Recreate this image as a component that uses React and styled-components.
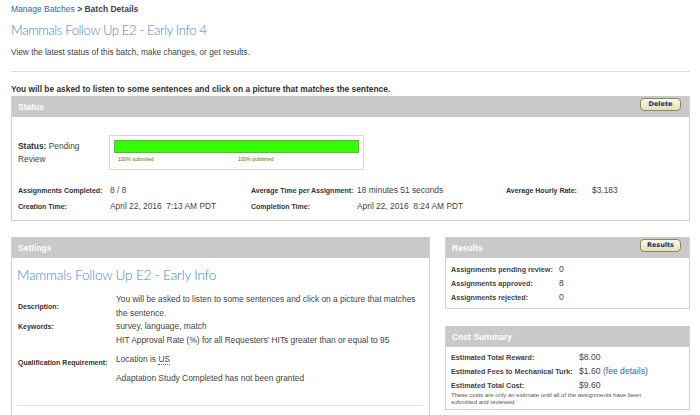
import styled, { createGlobalStyle } from "styled-components";

const Global = createGlobalStyle`
  html, body {
    margin: 0;
    padding: 0;
    background: #fff;
  }
  body {
    font-family: "Liberation Sans", Arial, sans-serif;
    color: #333;
    font-size: 8.5px;
  }
`;

const Page = styled.div`
  width: 700px;
  height: 415px;
  overflow: hidden;
  padding: 0 10px 0 11px;
  box-sizing: border-box;
`;

const Crumbs = styled.div`
  padding-top: 4px;
  font-size: 8.5px;
  line-height: 10px;
  color: #444;
  font-weight: bold;
`;

const Link = styled.a`
  color: #2d68a8;
  font-weight: normal;
  text-decoration: none;
`;

const Title = styled.h1`
  margin: ${(p) => (p.$small ? "8px 0 0" : "7px 0 0")};
  font-family: Lato, "Liberation Sans", sans-serif;
  font-weight: 300;
  font-size: ${(p) => (p.$small ? "13.6px" : "13px")};
  letter-spacing: ${(p) => (p.$small ? "-0.2px" : "-0.35px")};
  line-height: 18px;
  color: #4287cf;
`;

const Intro = styled.p`
  margin: 8px 0 0;
  font-size: 8.3px;
  line-height: 10px;
  color: #444;
`;

const Rule = styled.hr`
  border: 0;
  border-top: 1px solid #dcdcdc;
  margin: ${(p) => p.$margin || "14px 0 0"};
`;

const Lead = styled.p`
  margin: 12px 0 0;
  font-weight: bold;
  font-size: 8.4px;
  line-height: 10px;
  color: #333;
`;

const Panel = styled.section`
  border: 1px solid #d0d0d0;
  border-top: 0;
  background: #fff;
  margin-top: ${(p) => p.$top || "0"};
  box-sizing: border-box;
`;

const PanelHead = styled.div`
  height: 21px;
  background: #c9c9c9;
  display: flex;
  align-items: center;
  justify-content: space-between;
  padding: 0 8px 0 6px;
  color: #fff;
  font-weight: bold;
  font-size: 8.5px;
`;

const Button = styled.button`
  height: 13px;
  min-width: 41px;
  padding: 0 6px;
  margin-top: -4px;
  border: 1px solid #8c8a62;
  border-radius: 4px;
  background: linear-gradient(#fbf9e6, #e4dfb6);
  color: #1d2a6b;
  font-family: Verdana, "DejaVu Sans", sans-serif;
  font-weight: bold;
  font-size: 6.5px;
  line-height: 11px;
`;

const StatusBody = styled.div`
  padding: 18px 6px 8px;
`;

const StatusTop = styled.div`
  display: flex;
  align-items: center;
`;

const StatusText = styled.div`
  width: 91px;
  font-size: 8.4px;
  line-height: 13px;
  color: #444;
  b {
    color: #333;
  }
`;

const ProgressBox = styled.div`
  width: 255px;
  height: 35px;
  border: 1px solid #d8d8d8;
  box-sizing: border-box;
  padding: 4px 4px 0;
`;

const Bar = styled.div`
  height: 13px;
  background: #33ff00;
  border: 1px solid #5bb83a;
  box-sizing: border-box;
`;

const BarLabels = styled.div`
  display: flex;
  padding: 3px 0 0 4px;
  font-size: 5px;
  line-height: 6px;
  color: #6a6a00;
  span {
    width: 120px;
  }
`;

const StatsGrid = styled.div`
  display: grid;
  grid-template-columns: 92px 141px 106px 149px 86px auto;
  row-gap: 4px;
  margin-top: 14px;
  align-items: baseline;
`;

const Label = styled.span`
  font-weight: bold;
  font-size: 7px;
  line-height: 9px;
  color: #333;
  white-space: nowrap;
  align-self: ${(p) => p.$align || "auto"};
`;

const Value = styled.span`
  font-size: 8.4px;
  line-height: 12px;
  color: #444;
  white-space: nowrap;
`;

const Bottom = styled.div`
  display: flex;
  gap: 15px;
  margin-top: 16px;
  align-items: flex-start;
`;

const Left = styled.div`
  width: 419px;
  flex: none;
`;

const Right = styled.div`
  flex: 1;
  display: flex;
  flex-direction: column;
  gap: 17px;
`;

const SettingsBody = styled.div`
  padding: 0 6px 0 5px;
  height: 200px;
`;

const SettingsGrid = styled.div`
  display: grid;
  grid-template-columns: 98px 306px;
  margin-top: 9px;
  padding-left: 1px;
  align-items: center;
`;

const Cell = styled.div`
  font-size: 8.4px;
  line-height: 13.5px;
  color: #444;
  padding: ${(p) => p.$pad || "0"};
`;

const Dotted = styled.span`
  border-bottom: 1px dotted #666;
`;

const InfoBody = styled.div`
  padding: ${(p) => p.$pad || "4px 5px 4px"};
`;

const InfoRow = styled.div`
  display: flex;
  align-items: baseline;
  height: 14px;
  line-height: 14px;
`;

const InfoLabel = styled.span`
  width: ${(p) => p.$w};
  flex: none;
  font-weight: bold;
  font-size: 7.2px;
  color: #444;
`;

const InfoValue = styled.span`
  font-size: 8.6px;
  color: #444;
`;

const FeeLink = styled.a`
  color: #2d68a8;
  text-decoration: none;
`;

const Note = styled.p`
  margin: 0;
  font-size: 6px;
  line-height: 7px;
  color: #555;
  width: 196px;
`;

export default function App() {
  return (
    <Page>
      <Global />
      <Crumbs>
        <Link href="#">Manage Batches</Link> &gt; Batch Details
      </Crumbs>
      <Title>Mammals Follow Up E2 - Early Info 4</Title>
      <Intro>View the latest status of this batch, make changes, or get results.</Intro>
      <Rule />
      <Lead>You will be asked to listen to some sentences and click on a picture that matches the sentence.</Lead>

      <Panel $top="2px">
        <PanelHead>
          Status
          <Button>Delete</Button>
        </PanelHead>
        <StatusBody>
          <StatusTop>
            <StatusText>
              <b>Status:</b> Pending
              <br />
              Review
            </StatusText>
            <ProgressBox>
              <Bar />
              <BarLabels>
                <span>100% submitted</span>
                <span>100% published</span>
              </BarLabels>
            </ProgressBox>
          </StatusTop>
          <StatsGrid>
            <Label>Assignments Completed:</Label>
            <Value>8 / 8</Value>
            <Label>Average Time per Assignment:</Label>
            <Value>18 minutes 51 seconds</Value>
            <Label>Average Hourly Rate:</Label>
            <Value>$3.183</Value>
            <Label>Creation Time:</Label>
            <Value>April 22, 2016 &nbsp;7:13 AM PDT</Value>
            <Label>Completion Time:</Label>
            <Value>April 22, 2016 &nbsp;8:24 AM PDT</Value>
          </StatsGrid>
        </StatusBody>
      </Panel>

      <Bottom>
        <Left>
          <Panel>
            <PanelHead>Settings</PanelHead>
            <SettingsBody>
              <Title $small>Mammals Follow Up E2 - Early Info</Title>
              <SettingsGrid>
                <Label>Description:</Label>
                <Cell>
                  You will be asked to listen to some sentences and click on a picture that matches the sentence.
                </Cell>
                <Label>Keywords:</Label>
                <Cell>survey, language, match</Cell>
                <span />
                <Cell>HIT Approval Rate (%) for all Requesters' HITs greater than or equal to 95</Cell>
                <Label $align="end">Qualification Requirement:</Label>
                <Cell $pad="6px 0 0">
                  Location is <Dotted>US</Dotted>
                </Cell>
                <span />
                <Cell $pad="5px 0 0">Adaptation Study Completed has not been granted</Cell>
              </SettingsGrid>
              <Rule $margin="20px 0 0" />
            </SettingsBody>
          </Panel>
        </Left>
        <Right>
          <Panel>
            <PanelHead>
              Results
              <Button>Results</Button>
            </PanelHead>
            <InfoBody>
              <InfoRow>
                <InfoLabel $w="108px">Assignments pending review:</InfoLabel>
                <InfoValue>0</InfoValue>
              </InfoRow>
              <InfoRow>
                <InfoLabel $w="108px">Assignments approved:</InfoLabel>
                <InfoValue>8</InfoValue>
              </InfoRow>
              <InfoRow>
                <InfoLabel $w="108px">Assignments rejected:</InfoLabel>
                <InfoValue>0</InfoValue>
              </InfoRow>
            </InfoBody>
          </Panel>
          <Panel>
            <PanelHead>Cost Summary</PanelHead>
            <InfoBody $pad="3px 5px 3px">
              <InfoRow>
                <InfoLabel $w="128px">Estimated Total Reward:</InfoLabel>
                <InfoValue>$8.00</InfoValue>
              </InfoRow>
              <InfoRow>
                <InfoLabel $w="128px">Estimated Fees to Mechanical Turk:</InfoLabel>
                <InfoValue>
                  $1.60 <FeeLink href="#">(fee details)</FeeLink>
                </InfoValue>
              </InfoRow>
              <InfoRow>
                <InfoLabel $w="128px">Estimated Total Cost:</InfoLabel>
                <InfoValue>$9.60</InfoValue>
              </InfoRow>
              <Note>
                These costs are only an estimate until all of the assignments have been submitted and reviewed.
              </Note>
            </InfoBody>
          </Panel>
        </Right>
      </Bottom>
    </Page>
  );
}
